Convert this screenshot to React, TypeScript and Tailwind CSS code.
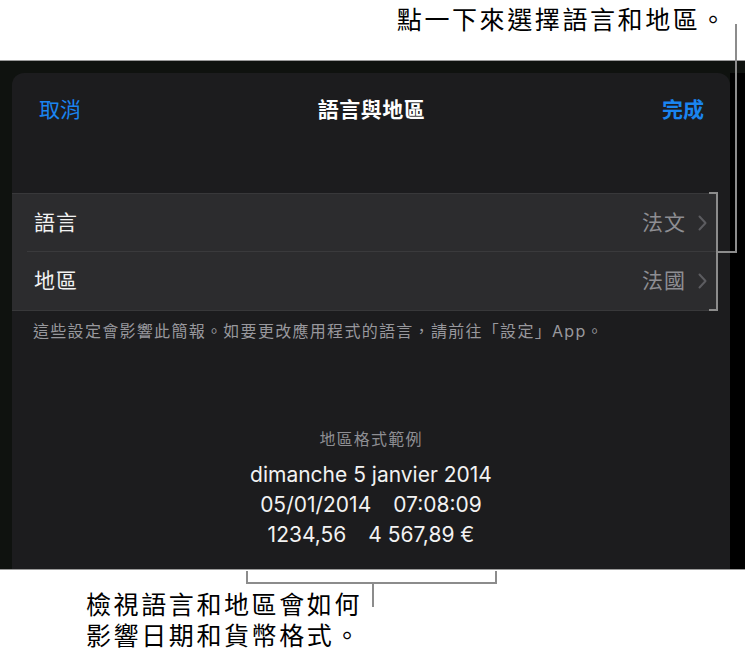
import React from "react";

const font = { fontFamily: "Inter, 'Noto Sans CJK TC', sans-serif" };

const Chevron = () => (
  <svg width="9" height="16" viewBox="0 0 9 16" fill="none" className="ml-[12px]">
    <path d="M1.5 1.5 L7.5 8 L1.5 14.5" stroke="#5c5c60" strokeWidth="2" strokeLinecap="round" strokeLinejoin="round" />
  </svg>
);

const Row = ({ label, value, last }: { label: string; value: string; last?: boolean }) => (
  <div className="flex h-[58px] items-center pl-[22px] pr-[9px] relative">
    <span className="text-[21px] text-[#f2f2f2] tracking-[1px]">{label}</span>
    <span className="ml-auto text-[21px] text-[#8e8e93] tracking-[1px]">{value}</span>
    <Chevron />
    {!last && <div className="absolute bottom-0 left-[15px] right-0 h-px bg-[#3a3a3c]" />}
  </div>
);

const Callouts = () => (
  <svg className="absolute inset-0 pointer-events-none" width="745" height="660">
    <g stroke="#8c8c8c" strokeWidth="2" fill="none">
      <path d="M736 24 V252 H717" />
      <path d="M709 193 H717 V310 H709" />
      <path d="M247 571 V583 H496 V571" />
      <path d="M373 583 V607" />
    </g>
  </svg>
);

export default function App() {
  return (
    <div className="relative w-[745px] h-[660px] bg-white overflow-hidden" style={font}>
      <div className="h-[60px] flex justify-end pr-[17px] pt-[4px]">
        <span className="text-[25px] leading-[32px] tracking-[2.6px] text-black">點一下來選擇語言和地區。</span>
      </div>

      <div className="h-[510px] flex bg-[#0f120f] border-t border-b border-[#9a9a9a] pl-[12px] pt-[12px]">
        <div className="w-[718px] h-full bg-[#1c1c1e] rounded-t-[12px] flex flex-col">
          <div className="h-[74px] flex items-center pl-[27px] pr-[26px]">
            <span className="w-[120px] text-[21px] text-[#1a84f0]">取消</span>
            <span className="flex-1 text-center text-[21px] font-bold text-white tracking-[0.5px]">語言與地區</span>
            <span className="w-[120px] text-right text-[21px] font-bold text-[#1a84f0]">完成</span>
          </div>

          <div className="mt-[46px] w-[704px] bg-[#2c2c2e] border-t border-b border-[#38383a]">
            <Row label="語言" value="法文" />
            <Row label="地區" value="法國" last />
          </div>

          <p className="pl-[21px] pt-[8px] text-[16px] leading-[24px] tracking-[1.3px] text-[#98989d]">
            這些設定會影響此簡報。如要更改應用程式的語言，請前往「設定」App。
          </p>

          <div className="mt-[84px] flex flex-col items-center">
            <span className="text-[16px] leading-[24px] tracking-[1.2px] text-[#8e8e93]">地區格式範例</span>
            <div className="mt-[9px] flex flex-col items-center text-[21px] leading-[30px] text-[#f2f2f2]">
              <span>dimanche 5 janvier 2014</span>
              <span className="flex gap-[22px]">
                <span>05/01/2014</span>
                <span>07:08:09</span>
              </span>
              <span className="flex gap-[22px]">
                <span>1234,56</span>
                <span>4 567,89 €</span>
              </span>
            </div>
          </div>
        </div>
        <div className="flex-1 h-full bg-black" />
      </div>

      <div className="pl-[86px] pt-[20px] text-[25px] leading-[31px] tracking-[2.6px] text-black">
        <div>檢視語言和地區會如何</div>
        <div>影響日期和貨幣格式。</div>
      </div>

      <Callouts />
    </div>
  );
}
